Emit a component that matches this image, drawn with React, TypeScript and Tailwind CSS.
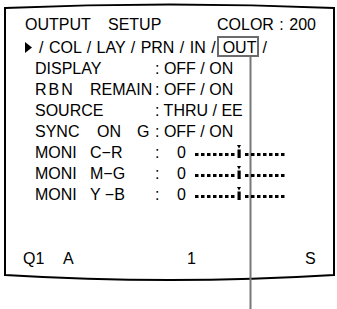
import React from "react";

function DotBar() {
  const left = [0, 6, 12, 18, 24, 30, 36];
  const right = [50, 56, 62, 68, 74, 80, 86];
  return (
    <svg width="92" height="13" viewBox="0 0 92 13" className="inline-block align-baseline">
      {left.concat(right).map((x) => (
        <rect key={x} x={x} y={8} width={3.5} height={3} fill="#000" />
      ))}
      <polygon points="42,0 46,0 44,3.5" fill="#000" />
      <rect x={42.5} y={4.5} width={3.2} height={8.5} fill="#000" />
    </svg>
  );
}

function Row({ label, value }: { label: React.ReactNode; value: React.ReactNode }) {
  return (
    <div className="flex h-[21px] pl-[10px]">
      <div className="flex w-[120px] shrink-0">{label}</div>
      <div className="flex">{value}</div>
    </div>
  );
}

function MoniValue() {
  return (
    <>
      <span className="w-[22px]">:</span>
      <span>0</span>
      <span className="ml-[9px]">
        <DotBar />
      </span>
    </>
  );
}

export default function App() {
  return (
    <div className="relative w-[337px] h-[309px] overflow-hidden bg-white text-black font-['Liberation_Sans',Arial,sans-serif] text-[16px] leading-[21px]">
      <svg
        className="absolute inset-0"
        width="337"
        height="309"
        viewBox="0 0 337 309"
      >
        <path
          d="M5 8 Q170 1 334 8 L334 275 Q170 285 5 275 Z"
          fill="none"
          stroke="#000"
          strokeWidth="2"
        />
        <line x1="250.5" y1="55" x2="250.5" y2="309" stroke="#777" strokeWidth="2" />
      </svg>

      <div className="relative pt-[14px] pl-[25px]">
        <div className="flex h-[21px]">
          <span className="w-[83px]">OUTPUT</span>
          <span className="w-[109px]">SETUP</span>
          <span className="[word-spacing:1px]">COLOR : 200</span>
        </div>

        <div className="flex h-[21px] mt-[2px] items-start whitespace-pre">
          <svg width="7" height="11" viewBox="0 0 7 11" className="mt-[5px] mr-[7px]">
            <polygon points="0,0 7,5.5 0,11" fill="#000" />
          </svg>
          <span className="[word-spacing:1px]">/ COL / LAY / PRN / IN /</span>
          <span className="relative ml-[7px]">
            OUT
            <span className="absolute -top-[1px] bottom-[1px] -left-[6px] -right-[3px] border-2 border-[#6b6b6b]" />
          </span>
          <span className="ml-[6px]">/</span>
        </div>

        <Row label={<span>DISPLAY</span>} value={<span className="whitespace-pre">: OFF / ON</span>} />
        <Row
          label={
            <>
              <span className="tracking-[2px] w-[55px]">RBN</span>
              <span>REMAIN</span>
            </>
          }
          value={<span className="whitespace-pre">: OFF / ON</span>}
        />
        <Row label={<span>SOURCE</span>} value={<span className="whitespace-pre">: THRU / EE</span>} />
        <Row
          label={
            <>
              <span className="w-[62px]">SYNC</span>
              <span className="w-[40px]">ON</span>
              <span>G</span>
            </>
          }
          value={<span className="whitespace-pre">: OFF / ON</span>}
        />
        <Row
          label={
            <>
              <span className="w-[55px]">MONI</span>
              <span>C−R</span>
            </>
          }
          value={<MoniValue />}
        />
        <Row
          label={
            <>
              <span className="w-[55px]">MONI</span>
              <span>M−G</span>
            </>
          }
          value={<MoniValue />}
        />
        <Row
          label={
            <>
              <span className="w-[55px]">MONI</span>
              <span className="whitespace-pre">Y −B</span>
            </>
          }
          value={<MoniValue />}
        />

        <div className="flex h-[21px] mt-[43px] -ml-[2px]">
          <span className="w-[40px]">Q1</span>
          <span className="w-[124px]">A</span>
          <span className="w-[118px]">1</span>
          <span>S</span>
        </div>
      </div>
    </div>
  );
}
